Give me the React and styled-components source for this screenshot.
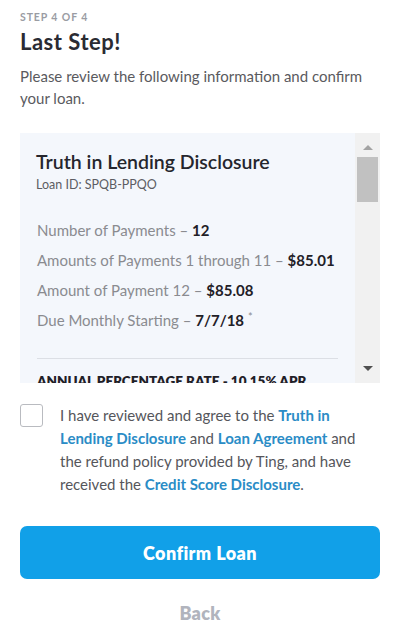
import React from "react";
import styled, { createGlobalStyle } from "styled-components";

const GlobalStyle = createGlobalStyle`
  html, body { margin: 0; padding: 0; background: #ffffff; }
  body { font-family: Lato, "Open Sans", Arial, sans-serif; -webkit-font-smoothing: antialiased; }
  * { box-sizing: border-box; }
`;

const Page = styled.main`
  width: 400px;
  padding: 10px 20px 0 20px;
  display: flex;
  flex-direction: column;
`;

const StepLabel = styled.div`
  font-size: 10.5px;
  line-height: 14px;
  font-weight: 700;
  letter-spacing: 0.9px;
  color: #9a9ca3;
  text-transform: uppercase;
`;

const Title = styled.h1`
  margin: 5px 0 0 0;
  font-size: 22px;
  line-height: 26px;
  font-weight: 700;
  letter-spacing: 0.5px;
  color: #2a2b33;
`;

const Intro = styled.p`
  margin: 10px 0 0 0;
  font-size: 15px;
  line-height: 22px;
  color: #5a5a5e;
`;

const Panel = styled.section`
  margin-top: 24px;
  height: 250px;
  display: flex;
  background: #f4f7fc;
`;

const PanelBody = styled.div`
  flex: 1;
  overflow: hidden;
  padding: 18px 17px 0 16px;
`;

const DocTitle = styled.h2`
  margin: 0;
  font-size: 19.5px;
  line-height: 22px;
  font-weight: 600;
  color: #25262d;
`;

const LoanId = styled.div`
  margin-top: 4px;
  font-size: 12.5px;
  line-height: 16px;
  color: #5c5d63;
`;

const Terms = styled.ul`
  list-style: none;
  margin: 22px 0 0 0;
  padding: 0 0 0 1px;
  display: flex;
  flex-direction: column;
`;

const Term = styled.li`
  font-size: 15px;
  line-height: 30px;
  color: #8a8b90;
  b { color: #1f2027; font-weight: 700; }
`;

const Asterisk = styled.span`
  font-size: 11px;
  color: #8a8b90;
  vertical-align: top;
  line-height: 24px;
`;

const Divider = styled.hr`
  margin: 23px 0 0 1px;
  border: 0;
  border-top: 1px solid #dcdfe5;
`;

const Apr = styled.div`
  margin-top: 12px;
  padding-left: 1px;
  font-size: 13.5px;
  line-height: 20px;
  font-weight: 800;
  color: #1f2027;
  text-transform: uppercase;
  white-space: nowrap;
`;

const ScrollTrack = styled.div`
  width: 25px;
  flex: none;
  background: #f1f1f1;
  display: flex;
  flex-direction: column;
  align-items: center;
  padding: 2px 2px;
`;

const Arrow = styled.div`
  width: 0;
  height: 0;
  border-left: 5px solid transparent;
  border-right: 5px solid transparent;
  ${(p) => (p.$up ? "border-bottom: 5px solid #a3a3a3;" : "border-top: 5px solid #505050;")}
  margin: ${(p) => (p.$up ? "10px 0 7px" : "0 0 10px")};
`;

const Thumb = styled.div`
  width: 21px;
  height: 45px;
  background: #c1c1c1;
`;

const Spacer = styled.div`
  flex: 1;
`;

const Agreement = styled.label`
  margin-top: 21px;
  display: flex;
  align-items: flex-start;
  gap: 17px;
  cursor: pointer;
`;

const Box = styled.span`
  flex: none;
  width: 23px;
  height: 23px;
  border: 1px solid #b9bbc0;
  border-radius: 3px;
  background: #fff;
`;

const AgreeText = styled.span`
  max-width: 310px;
  font-size: 15px;
  line-height: 23px;
  color: #55565b;
`;

const DocLink = styled.a`
  color: #2a8cc6;
  font-weight: 700;
  text-decoration: none;
`;

const ConfirmButton = styled.button`
  margin-top: 30px;
  height: 53px;
  width: 100%;
  border: 0;
  border-radius: 7px;
  background: #11a0e8;
  color: #ffffff;
  font-family: inherit;
  font-size: 18px;
  font-weight: 800;
  letter-spacing: 0.4px;
  cursor: pointer;
`;

const BackButton = styled.button`
  margin-top: 23px;
  align-self: center;
  border: 0;
  background: none;
  padding: 0;
  font-family: inherit;
  font-size: 18px;
  line-height: 22px;
  font-weight: 800;
  letter-spacing: 0.3px;
  color: #b1b4bd;
  cursor: pointer;
`;

export default function App() {
  return (
    <>
      <GlobalStyle />
      <Page>
        <StepLabel>Step 4 of 4</StepLabel>
        <Title>Last Step!</Title>
        <Intro>Please review the following information and confirm your loan.</Intro>
        <Panel>
          <PanelBody>
            <DocTitle>Truth in Lending Disclosure</DocTitle>
            <LoanId>Loan ID: SPQB-PPQO</LoanId>
            <Terms>
              <Term>Number of Payments – <b>12</b></Term>
              <Term>Amounts of Payments 1 through 11 – <b>$85.01</b></Term>
              <Term>Amount of Payment 12 – <b>$85.08</b></Term>
              <Term>Due Monthly Starting – <b>7/7/18</b> <Asterisk>*</Asterisk></Term>
            </Terms>
            <Divider />
            <Apr>Annual Percentage Rate - 10.15% APR</Apr>
            <Term>The cost of your credit as a yearly rate.</Term>
          </PanelBody>
          <ScrollTrack aria-hidden="true">
            <Arrow $up />
            <Thumb />
            <Spacer />
            <Arrow />
          </ScrollTrack>
        </Panel>
        <Agreement>
          <Box />
          <AgreeText>
            I have reviewed and agree to the <DocLink href="#">Truth in Lending Disclosure</DocLink> and{" "}
            <DocLink href="#">Loan Agreement</DocLink> and the refund policy provided by Ting, and have received the{" "}
            <DocLink href="#">Credit Score Disclosure</DocLink>.
          </AgreeText>
        </Agreement>
        <ConfirmButton>Confirm Loan</ConfirmButton>
        <BackButton>Back</BackButton>
      </Page>
    </>
  );
}
